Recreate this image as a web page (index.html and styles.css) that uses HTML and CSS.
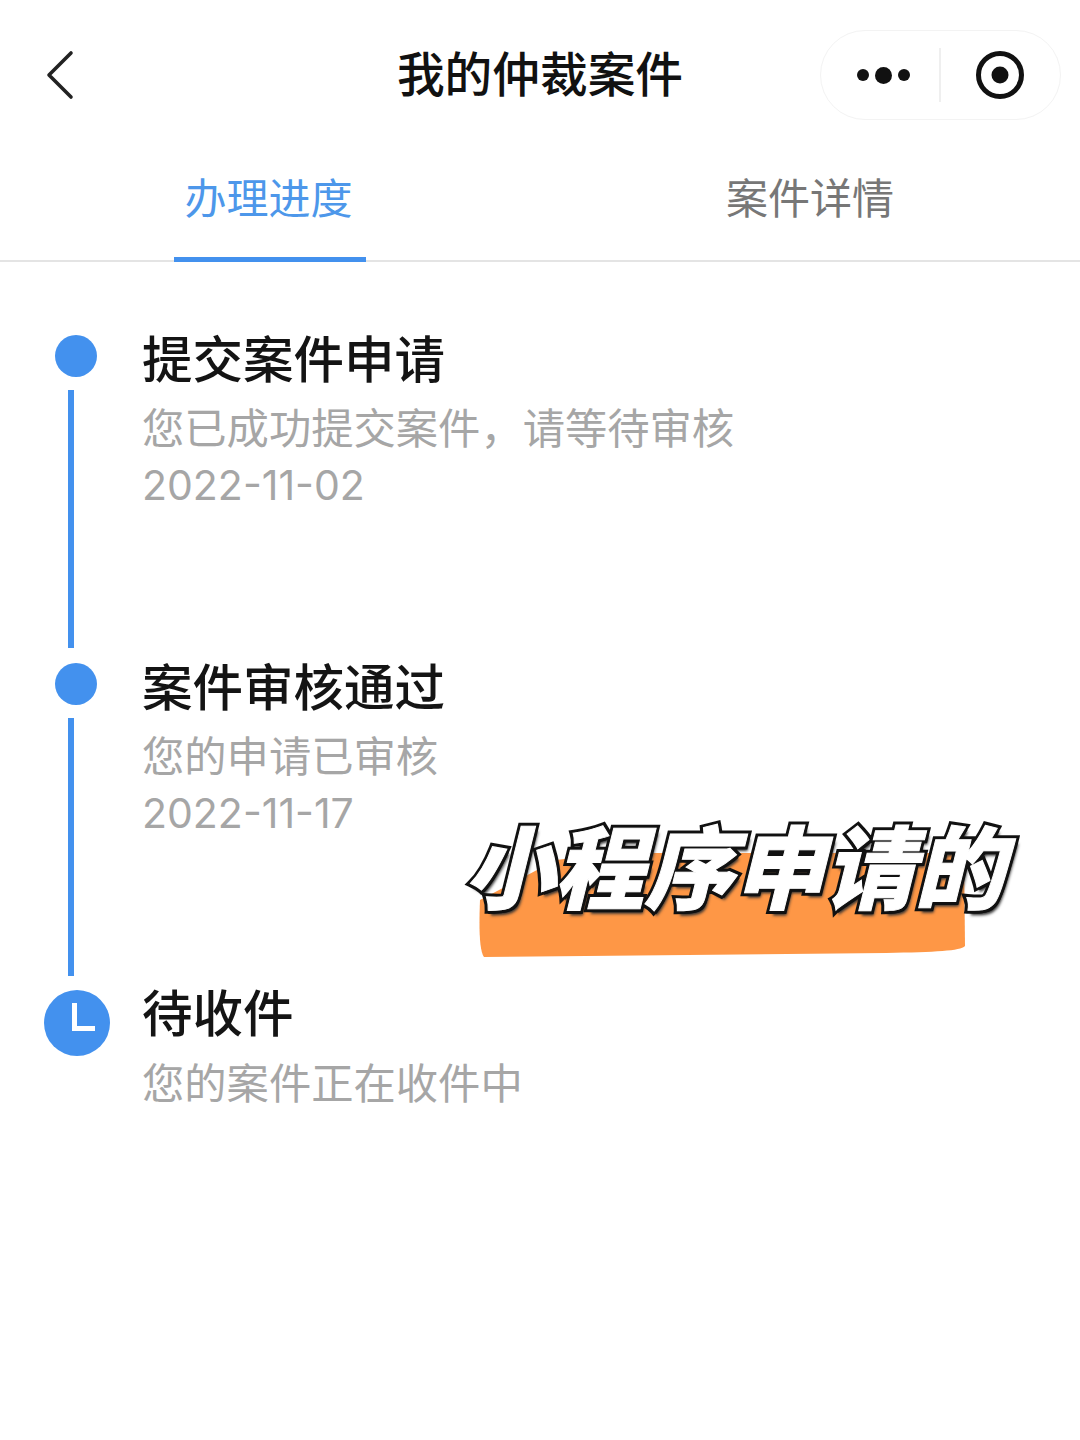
FILE: index.html
```html
<!DOCTYPE html>
<html lang="zh">
<head>
  <meta charset="UTF-8" />
  <title>我的仲裁案件</title>
  <link rel="stylesheet" href="styles.css">
</head>
<body>
  <div class="page">
    <header class="navbar">
      <div class="nav-left">
        <svg class="back" width="30" height="50" viewBox="0 0 30 50">
          <path d="M26 3 L4 25 L26 47" fill="none" stroke="#222" stroke-width="3.6" stroke-linecap="round" stroke-linejoin="round"/>
        </svg>
      </div>
      <h1 class="nav-title">我的仲裁案件</h1>
      <div class="nav-right">
        <div class="capsule">
          <div class="capsule-half capsule-more">
            <span class="pip"></span><span class="pip pip-big"></span><span class="pip"></span>
          </div>
          <div class="capsule-sep"></div>
          <div class="capsule-half">
            <svg width="50" height="50" viewBox="0 0 50 50">
              <circle cx="25" cy="25" r="21.5" fill="none" stroke="#111" stroke-width="5"/>
              <circle cx="25" cy="25" r="8.5" fill="#111"/>
            </svg>
          </div>
        </div>
      </div>
    </header>

    <nav class="tabs">
      <div class="tab active"><span>办理进度</span></div>
      <div class="tab"><span>案件详情</span></div>
    </nav>

    <section class="timeline">
      <div class="step">
        <div class="marker">
          <span class="dot"></span>
          <span class="rail"></span>
        </div>
        <div class="step-body">
          <h2>提交案件申请</h2>
          <p>您已成功提交案件，请等待审核</p>
          <p class="date">2022-11-02</p>
        </div>
      </div>
      <div class="step">
        <div class="marker">
          <span class="dot"></span>
          <span class="rail"></span>
        </div>
        <div class="step-body">
          <h2>案件审核通过</h2>
          <p>您的申请已审核</p>
          <p class="date">2022-11-17</p>
        </div>
      </div>
      <div class="step step-last">
        <div class="marker">
          <svg class="clock" width="66" height="66" viewBox="0 0 66 66">
            <circle cx="33" cy="33" r="33" fill="#4391ee"/>
            <path d="M30.5 13 V38.5 H51" fill="none" stroke="#fff" stroke-width="5"/>
          </svg>
        </div>
        <div class="step-body">
          <h2>待收件</h2>
          <p>您的案件正在收件中</p>
        </div>
      </div>
    </section>

    <div class="sticker">
      <svg class="sticker-bg" width="500" height="150" viewBox="0 0 500 150">
        <path d="M14 90 L90 50 L150 43 L498 43 L499 136 C494 141 470 142 420 143 L120 146 L18 147 C13 140 13 115 14 90 Z" fill="#fe9746"/>
      </svg>
      <span class="sticker-text" data-text="小程序申请的">小程序申请的</span>
    </div>
  </div>
</body>
</html>
```

FILE: styles.css
```css
* {
  box-sizing: border-box;
}

body {
  margin: 0;
  background: #fff;
  font-family: "Noto Sans CJK SC", "Noto Sans", sans-serif;
}

.page {
  position: relative;
  width: 1080px;
  height: 1440px;
  overflow: hidden;
}

h1, h2, p {
  margin: 0;
  font-weight: normal;
}

/* 顶部导航 */
.navbar {
  display: grid;
  grid-template-columns: 1fr auto 1fr;
  align-items: center;
  height: 150px;
}

.nav-left {
  padding-left: 45px;
  display: flex;
  align-items: center;
}

.nav-title {
  font-size: 47.7px;
  font-weight: 500;
  color: #111;
  line-height: 60px;
  margin-top: -6px;
}

.nav-right {
  display: flex;
  justify-content: flex-end;
  padding-right: 19px;
}

.capsule {
  width: 241px;
  height: 90px;
  border: 1.5px solid #f3f3f3;
  border-radius: 45px;
  display: flex;
  align-items: center;
}

.capsule-half {
  width: 118px;
  flex: none;
  display: flex;
  justify-content: center;
  align-items: center;
  gap: 6px;
}

.capsule-more {
  padding-left: 6px;
}

.capsule-sep {
  width: 2px;
  height: 54px;
  background: #efefef;
}

.pip {
  width: 12px;
  height: 12px;
  border-radius: 50%;
  background: #111;
}

.pip-big {
  width: 17px;
  height: 17px;
}

/* 标签 */
.tabs {
  display: flex;
  height: 112px;
  border-bottom: 2px solid #e4e4e4;
}

.tab {
  flex: 1;
  display: flex;
  justify-content: center;
  font-size: 42px;
  color: #777;
}

.tab span {
  width: 192px;
  height: 112px;
  padding-top: 18px;
  line-height: 56px;
  text-align: center;
}

.tab.active span {
  color: #4d97ea;
  text-indent: -3px;
  border-bottom: 5px solid #4391ee;
}

/* 时间线 */
.timeline {
  padding-top: 73px;
}

.step {
  display: flex;
  height: 328px;
}

.marker {
  width: 142px;
  padding-left: 55px;
  display: flex;
  flex-direction: column;
  align-items: flex-start;
}

.dot {
  width: 42px;
  height: 42px;
  border-radius: 50%;
  background: #4391ee;
}

.rail {
  width: 6px;
  height: 258px;
  margin: 13px 0 0 13px;
  background: #4391ee;
}

.clock {
  margin: -1px 0 0 -11px;
}

.step-body h2 {
  font-size: 50.5px;
  font-weight: 500;
  line-height: 50px;
  color: #141414;
  margin-top: -4.5px;
  margin-bottom: 17.5px;
}

.step-last .step-body {
  margin-top: -1.5px;
}

.step-body p {
  font-size: 42.3px;
  line-height: 56px;
  color: #a6a6a6;
}

.step-body .date {
  font-family: "Inter", "Noto Sans", sans-serif;
  font-size: 41px;
  margin-top: 3px;
}

/* 贴纸 */
.sticker {
  position: absolute;
  left: 466px;
  top: 810px;
  width: 560px;
  height: 150px;
}

.sticker-bg {
  position: absolute;
  left: 0;
  top: 0;
}

.sticker-text {
  position: absolute;
  left: 8px;
  top: -3px;
  font-size: 90px;
  line-height: 112px;
  font-weight: 900;
  white-space: nowrap;
  color: #111;
  transform: skewX(-14deg);
  -webkit-text-stroke: 7px #111;
  text-shadow: 3px 3px 0 #111, 4px 5px 3px #333;
}

.sticker-text::after {
  content: attr(data-text);
  position: absolute;
  left: 0;
  top: 0;
  color: #fff;
  -webkit-text-stroke: 1px #fff;
  text-shadow: none;
}
```
